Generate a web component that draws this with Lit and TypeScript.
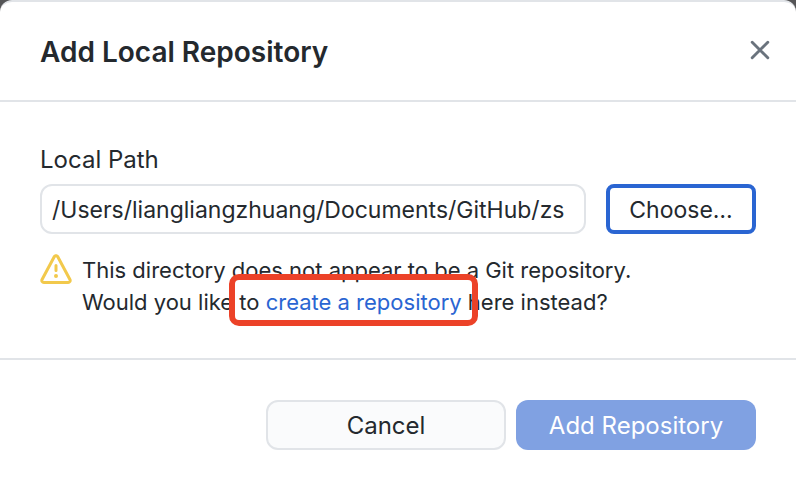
import { LitElement, html, css, svg } from "lit";
import { customElement, state } from "lit/decorators.js";

const closeIcon = svg`<svg class="close-icon" viewBox="0 0 20 20" aria-hidden="true">
  <path d="M2.2 2.2 17.8 17.8M17.8 2.2 2.2 17.8" fill="none" stroke="currentColor" stroke-width="2.9" stroke-linecap="round" />
</svg>`;

const alertIcon = svg`<svg class="alert-icon" viewBox="0 0 16 16" aria-hidden="true">
  <path fill="currentColor" d="M6.457 1.047c.659-1.234 2.427-1.234 3.086 0l6.082 11.378A1.75 1.75 0 0 1 14.082 15H1.918a1.75 1.75 0 0 1-1.543-2.575Zm1.763.707a.25.25 0 0 0-.44 0L1.698 13.132a.25.25 0 0 0 .22.368h12.164a.25.25 0 0 0 .22-.368Zm.53 3.996v2.5a.75.75 0 0 1-1.5 0v-2.5a.75.75 0 0 1 1.5 0ZM9 11a1 1 0 1 1-2 0 1 1 0 0 1 2 0Z" />
</svg>`;

@customElement("app-root")
export class AppRoot extends LitElement {
  @state() private path = "/Users/liangliangzhuang/Documents/GitHub/zs";

  static styles = css`
    :host {
      display: block;
      min-height: 100vh;
      background: #555557;
      color: #24292e;
      font-family: Inter, "Liberation Sans", sans-serif;
      font-size: 24px;
      line-height: 32px;
    }
    * {
      box-sizing: border-box;
    }
    .dialog {
      display: flex;
      flex-direction: column;
      min-height: 100vh;
      background: #fff;
      border-top: 2px solid #e1e4e8;
      border-radius: 12px 12px 0 0;
    }
    .header {
      display: flex;
      align-items: center;
      justify-content: space-between;
      padding: 32px 26px 30px 40px;
      border-bottom: 2px solid #e1e4e8;
    }
    .title {
      margin: 0;
      font-size: 28px;
      line-height: 36px;
      font-weight: 600;
    }
    .close {
      display: flex;
      padding: 0 0 4px;
      border: 0;
      background: none;
      color: #6a737d;
    }
    .close-icon {
      width: 20px;
      height: 20px;
    }
    .content {
      padding: 40px;
    }
    .label {
      display: block;
      margin-bottom: 6px;
      line-height: 36px;
    }
    .row {
      display: flex;
      gap: 20px;
    }
    .path,
    .button {
      height: 50px;
      border: 2px solid #e1e4e8;
      border-radius: 12px;
      color: inherit;
      font: inherit;
    }
    .path {
      flex: 1;
      min-width: 0;
      padding: 2px 10px 0;
      background: #fff;
      font-size: 23px;
      outline: none;
    }
    .button {
      flex: none;
      width: 240px;
      padding: 2px 0 0;
      background: #fafbfc;
    }
    .choose {
      width: 150px;
      border: 4px solid #2a65d2;
      border-radius: 8px;
      background: #fff;
      font-size: 23px;
    }
    .submit {
      border: 0;
      background: #80a1e2;
      color: #fff;
    }
    .warning {
      display: flex;
      gap: 10px;
      margin-top: 20px;
    }
    .alert-icon {
      flex: none;
      width: 32px;
      height: 32px;
      color: #f2c94c;
    }
    .message {
      margin: 0;
      font-size: 22px;
    }
    .marked {
      position: relative;
      white-space: nowrap;
    }
    .marked::after {
      content: "";
      position: absolute;
      inset: -15px -16px -11px -10px;
      border: 6px solid #ec4228;
      border-radius: 10px;
      pointer-events: none;
    }
    .link {
      color: #2a65d2;
      text-decoration: none;
    }
    .footer {
      display: flex;
      justify-content: flex-end;
      gap: 10px;
      padding: 40px 40px 36px;
      border-top: 2px solid #e1e4e8;
    }
  `;

  render() {
    return html`
      <main class="dialog" role="dialog" aria-labelledby="title">
        <header class="header">
          <h1 class="title" id="title">Add Local Repository</h1>
          <button class="close" type="button" aria-label="Close">${closeIcon}</button>
        </header>
        <section class="content">
          <label class="label" for="path">Local Path</label>
          <div class="row">
            <input
              class="path"
              id="path"
              type="text"
              spellcheck="false"
              .value=${this.path}
              @input=${(e: Event) => (this.path = (e.target as HTMLInputElement).value)}
            />
            <button class="button choose" type="button">Choose…</button>
          </div>
          <div class="warning">
            ${alertIcon}
            <p class="message">
              This directory does not appear to be a Git repository.<br />
              Would you like <span class="marked">to <a class="link" href="#create">create a repository</a></span> here instead?
            </p>
          </div>
        </section>
        <footer class="footer">
          <button class="button" type="button">Cancel</button>
          <button class="button submit" type="button" disabled>Add Repository</button>
        </footer>
      </main>
    `;
  }
}
